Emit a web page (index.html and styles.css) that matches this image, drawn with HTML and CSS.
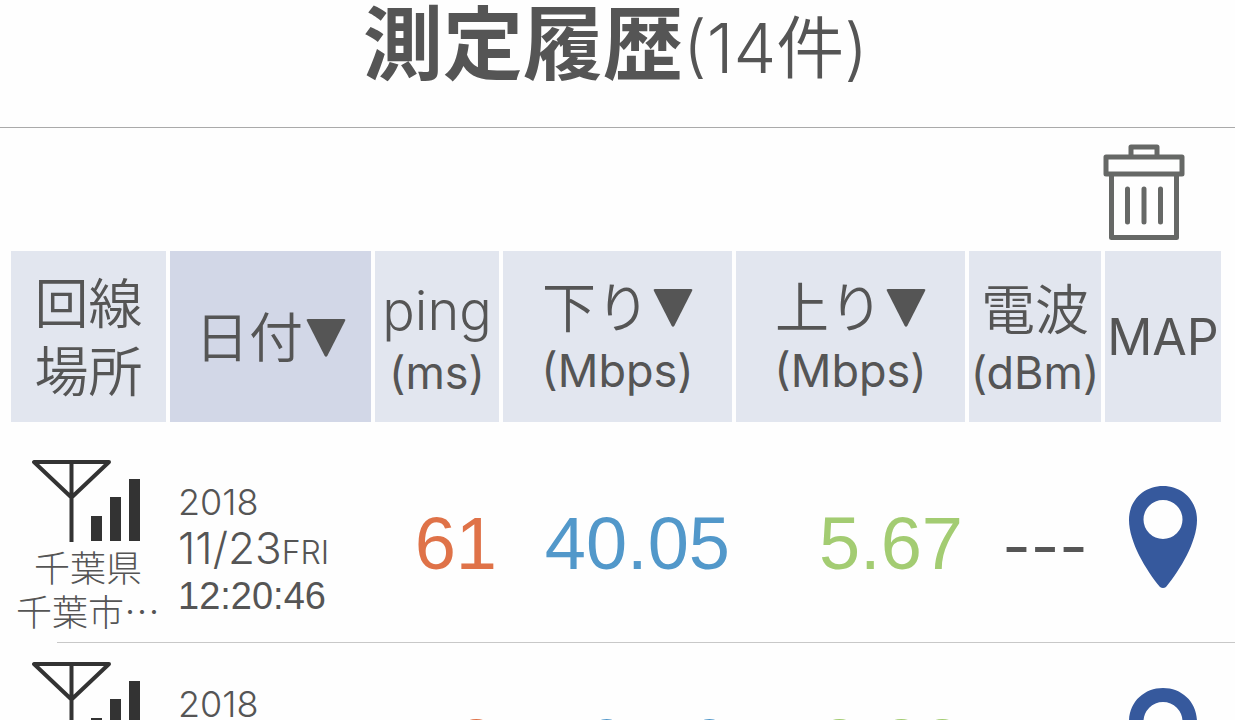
FILE: index.html
```html
<!DOCTYPE html>
<html lang="ja">
<head>
    <meta charset="UTF-8">
    <meta name="viewport" content="width=device-width, initial-scale=1">
    <title>測定履歴</title>
    <link rel="stylesheet" href="styles.css">
</head>
<body>

<!-- Shared icons -->
<svg class="icon-defs" aria-hidden="true">
    <symbol id="arrow" viewBox="0 0 40 40">
        <path d="M2 1h36q2 0 1 2L21.500 37.500q-1.500 2.500-3 0L1 3q-1-2 1-2z"/>
    </symbol>
    <symbol id="antenna" viewBox="0 0 112 84">
        <path d="M2 3h75L39.500 38.500zM39.500 3v80" fill="none" stroke="#333" stroke-width="4" stroke-linejoin="round"/>
        <path d="M59 57h11v25H59zM78 38h11v44H78zM97 20h11v62H97z"/>
    </symbol>
    <symbol id="pin" viewBox="0 0 68 102">
        <path fill-rule="evenodd" d="M34 0C15 0 0 14 0 34c0 22 17 50 31 67q3 2 6 0c14-17 31-45 31-67C68 14 53 0 34 0zm0 14a19.500 19.500 0 1 1 0 39 19.500 19.500 0 0 1 0-39z"/>
    </symbol>
</svg>

<header class="header">
    <h1>測定履歴<span class="count">(14件)</span></h1>
</header>

<div class="toolbar">
    <button class="trash" type="button" aria-label="削除">
        <svg viewBox="0 0 82 96" width="82" height="96">
            <g fill="none" stroke="#666866" stroke-width="5" stroke-linejoin="round" stroke-linecap="round">
                <path d="M28 13V3h26v10M3 13h76v17H3zM8.500 30v63.500h65V30"/>
                <path d="M24.500 45v33M41 45v33M57.500 45v33"/>
            </g>
        </svg>
    </button>
</div>

<table class="history">
    <colgroup>
        <col class="col-line">
        <col class="col-date">
        <col class="col-ping">
        <col>
        <col>
        <col class="col-signal">
        <col class="col-map">
    </colgroup>
    <thead>
        <tr>
            <th class="line-head">回線<br>場所</th>
            <th class="sorted"><button type="button">日付<svg class="arrow"><use href="#arrow"/></svg></button></th>
            <th>ping<span class="unit">(ms)</span></th>
            <th><button type="button">下り<svg class="arrow"><use href="#arrow"/></svg><span class="unit">(Mbps)</span></button></th>
            <th><button type="button">上り<svg class="arrow"><use href="#arrow"/></svg><span class="unit">(Mbps)</span></button></th>
            <th>電波<span class="unit">(dBm)</span></th>
            <th class="map-head">MAP</th>
        </tr>
    </thead>
    <tbody>
        <tr>
            <td class="place">
                <svg class="antenna"><use href="#antenna"/></svg>
                <div>千葉県</div>
                <div>千葉市⋯</div>
            </td>
            <td class="date">
                <div class="year">2018</div>
                <div class="day">11/23<small>FRI</small></div>
                <div class="time">12:20:46</div>
            </td>
            <td class="num ping">61</td>
            <td class="num down">40.05</td>
            <td class="num up">5.67</td>
            <td class="signal">---</td>
            <td class="map"><button type="button" aria-label="MAP"><svg class="pin"><use href="#pin"/></svg></button></td>
        </tr>
        <tr>
            <td class="place">
                <svg class="antenna"><use href="#antenna"/></svg>
            </td>
            <td class="date">
                <div class="year">2018</div>
            </td>
            <td class="num ping">48</td>
            <td class="num down">40.10</td>
            <td class="num up">8.88</td>
            <td class="signal"></td>
            <td class="map"><button type="button" aria-label="MAP"><svg class="pin"><use href="#pin"/></svg></button></td>
        </tr>
    </tbody>
</table>

</body>
</html>
```
FILE: styles.css
```css
html {
    height: 100%;
    overflow: hidden;
}
body {
    height: 100%;
    margin: 0;
    overflow: hidden;
    background: #fefefe;
    color: #555;
    font-family: Inter, "Noto Sans CJK JP", sans-serif;
}
button {
    padding: 0;
    border: none;
    background: none;
    color: inherit;
    font: inherit;
    cursor: pointer;
}
.icon-defs {
    display: none;
}
.header {
    height: 127px;
    border-bottom: 1px solid #aaa;
    text-align: center;
}
h1 {
    margin: 0;
    padding-right: 4px;
    font-size: 80px;
    line-height: 88px;
}
.count {
    font-size: 68px;
    font-weight: 350;
}
.toolbar {
    display: flex;
    justify-content: flex-end;
    padding: 16px 50px 11px 0;
}
.trash svg {
    display: block;
}

/* Table */
.history {
    width: 100%;
    table-layout: fixed;
    border-spacing: 0;
}
.col-line { width: 170px; }
.col-date { width: 205px; }
.col-ping { width: 128px; }
.col-signal { width: 136px; }
.col-map { width: 130px; }

th {
    height: 171px;
    box-sizing: border-box;
    padding: 4px 0 0;
    border-right: 4px solid #fefefe;
    background: #e2e6ef;
    font-size: 54px;
    font-weight: 350;
    line-height: 68px;
    white-space: nowrap;
}
th.sorted {
    background: #d2d7e7;
}
.line-head {
    border-left: 11px solid #fefefe;
}
.map-head {
    padding-top: 0;
    border-right-width: 14px;
    font-size: 50px;
    font-weight: 400;
}
.unit {
    display: block;
    font-size: 45px;
    font-weight: 400;
    line-height: 56px;
}
.arrow {
    width: 40px;
    height: 40px;
    margin-left: 3px;
    fill: #555;
}
tbody tr {
    background: linear-gradient(#c8c8c8, #c8c8c8) 57px 100% / 100% 1px no-repeat;
}
td {
    height: 202px;
    box-sizing: border-box;
    padding: 0;
    vertical-align: top;
}
tbody tr:first-child td {
    height: 221px;
    border-top: 19px solid #fefefe;
}
.place {
    padding: 18px 0 0 6px;
    font-size: 36px;
    font-weight: 300;
    line-height: 44px;
    text-align: center;
}
.antenna {
    display: block;
    width: 112px;
    height: 84px;
    margin: 0 auto 4px;
    fill: #333;
}
.date {
    padding: 38px 0 0 8px;
    line-height: 46px;
    white-space: nowrap;
}
.year {
    font-size: 36px;
    font-weight: 350;
}
.day {
    font-size: 44px;
    font-weight: 350;
}
.day small { font-size: 32px; }
.time {
    font-family: "Liberation Sans", sans-serif;
    font-size: 38px;
    line-height: 40px;
}
.num {
    padding: 59px 6px 0 0;
    font-family: "Liberation Sans", sans-serif;
    font-size: 74px;
    line-height: 88px;
    text-align: right;
}
.ping { color: #df7248; }
.down { color: #5298ca; }
.up { color: #a3cc72; }
.signal {
    padding: 62px 0 0 16px;
    font-size: 62px;
    line-height: 88px;
    text-align: center;
}
.map {
    padding: 45px 14px 0 0;
    text-align: center;
}
.pin {
    display: block;
    width: 68px;
    height: 102px;
    fill: #36599d;
}
```
